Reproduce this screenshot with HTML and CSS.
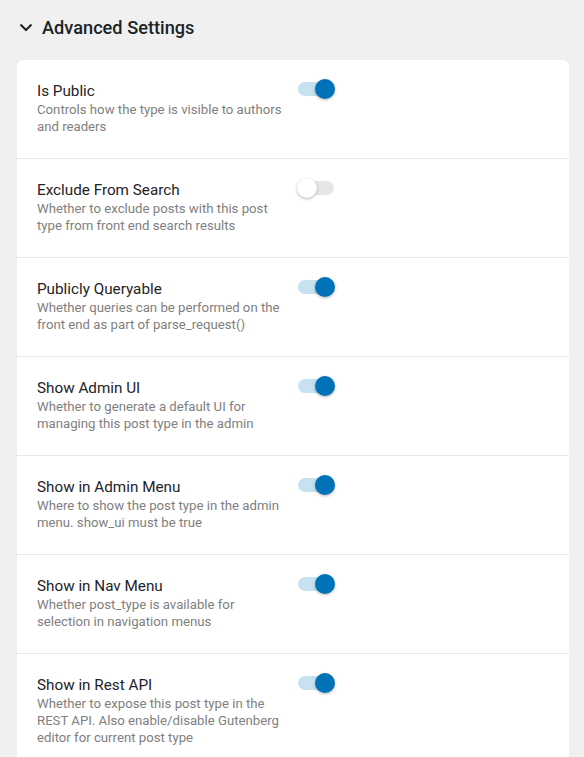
FILE: index.html
```html
<!DOCTYPE html>
<html lang="en">
<head>
    <meta charset="UTF-8">
    <meta name="viewport" content="width=device-width, initial-scale=1.0">
    <title>Advanced Settings</title>
    <link rel="stylesheet" href="styles.css">
</head>
<body>
    <!-- Section header -->
    <div class="section-head">
        <svg class="chevron" width="14" height="14" viewBox="0 0 14 14">
            <path d="M1.5 4.5 L7 10 L12.5 4.5" fill="none" stroke="#1d2327" stroke-width="2"/>
        </svg>
        <h2>Advanced Settings</h2>
    </div>

    <!-- Settings list -->
    <div class="card">
        <div class="row">
            <div class="info">
                <div class="title">Is Public</div>
                <div class="desc">Controls how the type is visible to authors and readers</div>
            </div>
            <span class="switch on"><span class="thumb"></span></span>
        </div>
        <div class="row">
            <div class="info">
                <div class="title">Exclude From Search</div>
                <div class="desc">Whether to exclude posts with this post type from front end search results</div>
            </div>
            <span class="switch"><span class="thumb"></span></span>
        </div>
        <div class="row">
            <div class="info">
                <div class="title">Publicly Queryable</div>
                <div class="desc">Whether queries can be performed on the front end as part of parse_request()</div>
            </div>
            <span class="switch on"><span class="thumb"></span></span>
        </div>
        <div class="row">
            <div class="info">
                <div class="title">Show Admin UI</div>
                <div class="desc">Whether to generate a default UI for managing this post type in the admin</div>
            </div>
            <span class="switch on"><span class="thumb"></span></span>
        </div>
        <div class="row">
            <div class="info">
                <div class="title">Show in Admin Menu</div>
                <div class="desc">Where to show the post type in the admin menu. show_ui must be true</div>
            </div>
            <span class="switch on"><span class="thumb"></span></span>
        </div>
        <div class="row">
            <div class="info">
                <div class="title">Show in Nav Menu</div>
                <div class="desc">Whether post_type is available for selection in navigation menus</div>
            </div>
            <span class="switch on"><span class="thumb"></span></span>
        </div>
        <div class="row">
            <div class="info">
                <div class="title">Show in Rest API</div>
                <div class="desc">Whether to expose this post type in the REST API. Also enable/disable Gutenberg editor for current post type</div>
            </div>
            <span class="switch on"><span class="thumb"></span></span>
        </div>
    </div>
</body>
</html>
```

FILE: styles.css
```css
body {
    margin: 0;
    padding: 0 15px 0 17px;
    background-color: #f0f0f0;
    font-family: Roboto, "Liberation Sans", sans-serif;
    color: #1d2327;
}
.section-head {
    display: flex;
    align-items: center;
    gap: 9px;
    height: 54px;
    padding-left: 2px;
}
.section-head h2 {
    margin: 0;
    font-size: 18.2px;
    font-weight: 500;
    color: #1d2327;
}
.chevron {
    display: block;
}
.card {
    margin-top: 6px;
    background-color: #fff;
    border-radius: 6px;
}
.row {
    display: flex;
    align-items: flex-start;
    gap: 11px;
    padding: 21px 20px 23px 20px;
    border-bottom: 1px solid #e8e8e8;
    min-height: 54px;
}
.info {
    width: 250px;
}
.title {
    font-size: 15.25px;
    line-height: 20px;
}
.desc {
    font-size: 13.2px;
    line-height: 17px;
    color: #808080;
}
.switch {
    position: relative;
    display: block;
    width: 36px;
    height: 14px;
    margin-top: 1px;
    border-radius: 7px;
    background-color: #e6e6e6;
}
.switch .thumb {
    position: absolute;
    top: -3px;
    left: -1px;
    width: 20px;
    height: 20px;
    border-radius: 50%;
    background-color: #fff;
    box-shadow: 0 1px 3px rgba(0, 0, 0, 0.3);
}
.switch.on {
    background-color: #c7e1f0;
}
.switch.on .thumb {
    left: auto;
    right: -1px;
    background-color: #0073b8;
}
```
